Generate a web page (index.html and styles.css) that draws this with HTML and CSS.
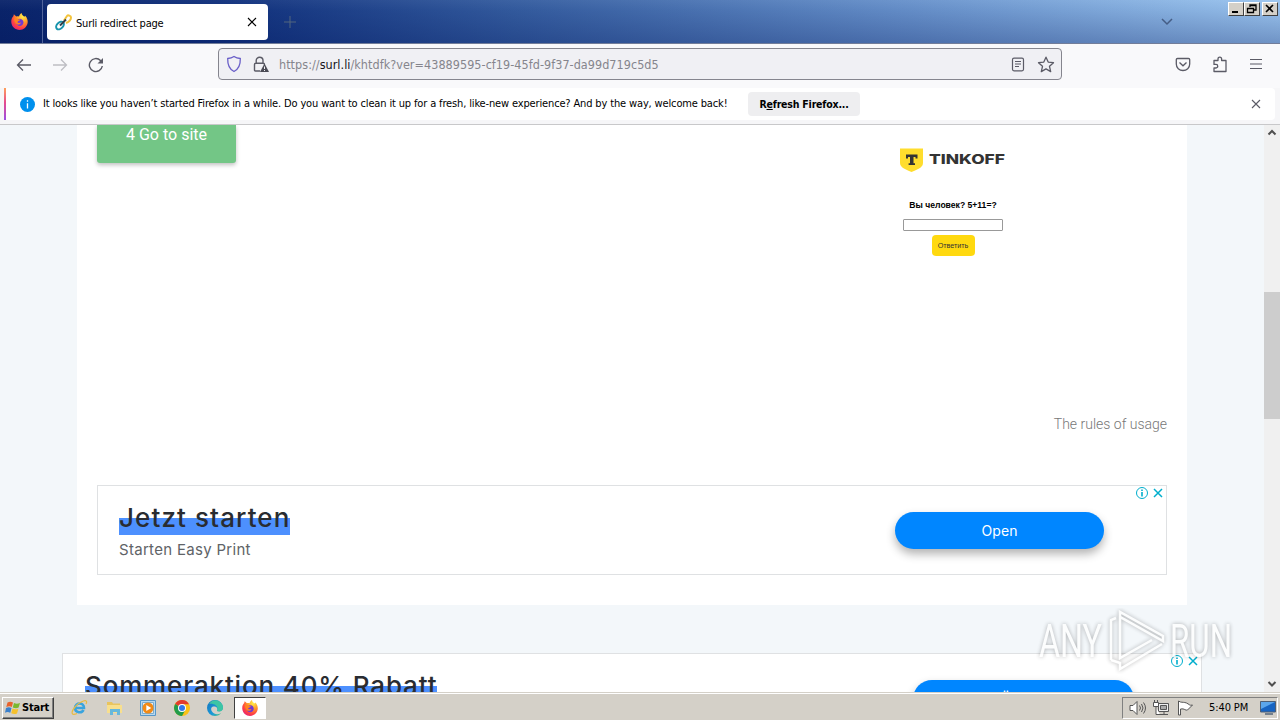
FILE: index.html
```html
<!DOCTYPE html>
<html lang="en">
<head>
    <meta charset="UTF-8">
    <title>Surli redirect page</title>
    <link rel="stylesheet" href="styles.css">
</head>
<body>
    <svg width="0" height="0" class="defs">
        <defs>
            <radialGradient id="fox" cx="0.7" cy="0.2" r="0.9">
                <stop offset="0" stop-color="#fff04a"/>
                <stop offset="0.4" stop-color="#ff9a28"/>
                <stop offset="0.75" stop-color="#ff4044"/>
                <stop offset="1" stop-color="#e0207a"/>
            </radialGradient>
            <linearGradient id="edge" x1="0" y1="0" x2="1" y2="1">
                <stop offset="0" stop-color="#1672bd"/>
                <stop offset="0.6" stop-color="#1a9ad8"/>
                <stop offset="1" stop-color="#55d070"/>
            </linearGradient>
            <symbol id="firefox" viewBox="0 0 16 16">
                <path fill="url(#fox)" d="M.3 9C0 6 1 4.200 2.200 3l.5-1.800L5 3.300c.8-.3 1.700-.3 2.500 0C8 1.800 9 .5 10 0c.1 2 1.500 2.500 2.500 3.600l.8-1C15.300 4.500 16 7 15.700 9.200 15.100 13 12 16 8 16S.7 13 .3 9z"/>
                <path fill="#7139d4" d="M4.500 8.500C5 6.300 6.500 5.300 8.500 5.300c2 .2 3.200 1.600 3.200 3.400 0 2-1.500 3.500-3.500 3.500s-3.700-1.500-3.700-3.700z"/>
                <path fill="#ff8420" d="M3 5.500c1.500-.8 3-.6 4 .5l2 .2c-.5 1.400-2.300 1.100-3 2.500 1 1 2.200.6 3.500.2-.5 1.600-2.500 2.600-4.300 1.500C4 9.500 3 7.500 3 5.500z"/>
            </symbol>
            <symbol id="cross" viewBox="0 0 10 10">
                <path d="M1 1l8 8M9 1L1 9" fill="none" stroke="currentColor" stroke-width="1.100"/>
            </symbol>
            <symbol id="adinfo" viewBox="0 0 14 14">
                <circle cx="7" cy="7" r="5.500" fill="#fff" stroke="#00aecd" stroke-width="1"/>
                <path d="M7 3.500v1.600M7 6v4.500" stroke="#00aecd" stroke-width="1.600"/>
            </symbol>
        </defs>
    </svg>

    <header class="titlebar">
        <div class="pinned"><svg width="17" height="17"><use href="#firefox"/></svg></div>
        <div class="tab">
            <svg class="favicon" width="17" height="17" viewBox="0 0 17 17" fill="none" stroke-width="2">
                <path d="M9 6.500l3-4.500c1-1.300 4-.3 4 1.500 0 2.500-2.500 4.500-5 5.500" stroke="#f3c33c"/>
                <ellipse cx="5" cy="11.500" rx="4.500" ry="3" transform="rotate(-45 5 11.500)" stroke="#1793ac"/>
                <path d="M5 11.500l6-6" stroke="#333e48"/>
            </svg>
            <span class="tab-title">Surli redirect page</span>
            <svg class="tab-close" width="10" height="10"><use href="#cross"/></svg>
        </div>
        <svg class="new-tab" width="12" height="12" viewBox="0 0 12 12"><path d="M6 0v12M0 6h12" stroke="#53667f"/></svg>
        <svg class="all-tabs" width="12" height="8" viewBox="0 0 12 8"><path d="M1 1l5 5 5-5" fill="none" stroke="#455d85" stroke-width="1.500"/></svg>
        <div class="window-buttons">
            <span><svg width="14" height="12"><path d="M3 9h6" stroke="#000" stroke-width="2"/></svg></span>
            <span><svg width="14" height="12"><path d="M5 4V2h6v5H9M5 2.500h6M2.500 5.500h6v4h-6zM2 5.500h7" fill="none" stroke="#000" stroke-width="1.300"/></svg></span>
            <span class="win-close"><svg width="14" height="12"><path d="M3 2l7 7M10 2L3 9" stroke="#000" stroke-width="1.600"/></svg></span>
        </div>
    </header>

    <nav class="toolbar">
        <div class="history">
            <svg width="16" height="16" viewBox="0 0 16 16" fill="none" stroke="#5b5b66" stroke-width="1.300"><path d="M15 8H1.500M7 2.500L1.500 8 7 13.500"/></svg>
            <svg width="16" height="16" viewBox="0 0 16 16" fill="none" stroke="#bebec3" stroke-width="1.300"><path d="M1 8h13.500M9 2.500L14.500 8 9 13.500"/></svg>
            <svg width="16" height="16" viewBox="0 0 16 16" fill="none" stroke="#5b5b66" stroke-width="1.400"><path d="M14.300 9A6.500 6.500 0 1 1 12.500 3.500L14 5"/><path d="M15 1v5.500H9.500z" fill="#5b5b66" stroke="none"/></svg>
        </div>
        <div class="urlbar">
            <svg width="16" height="18" viewBox="0 0 16 18" fill="none" stroke="#6a5fc8" stroke-width="1.300"><path d="M8 1.500c2 1.300 4 1.800 6.300 2C14.500 9.500 13 14 8 16.500 3 14 1.500 9.500 1.700 3.500 4 3.300 6 2.800 8 1.500z"/></svg>
            <svg class="lock" width="16" height="17" viewBox="0 0 16 17"><path d="M7 15H2.500c-1 0-1-.5-1-1V8.500c0-1 .5-1.300 1.300-1.300h7.500c1 0 1.200.6 1.200 1.600M3.200 7V4.600a3.400 3.400 0 0 1 6.800 0V7" fill="none" stroke="#5b5b66" stroke-width="1.400"/><path d="M11.500 7.500L16 16H7z" fill="#4b4b55"/><path d="M11.500 10.500v2.500M11.500 14v1" stroke="#f0f0f4"/></svg>
            <span class="url">https://<b>surl.li</b>/khtdfk?ver=43889595-cf19-45fd-9f37-da99d719c5d5</span>
            <svg class="reader" width="14" height="15" viewBox="0 0 14 15" fill="none" stroke="#5b5b66" stroke-width="1.200"><rect x="1.500" y="1.200" width="11" height="12.600" rx="1.500"/><path d="M4 4.500h6M4 7h6M4 9.500h4"/></svg>
            <svg width="18" height="17" viewBox="0 0 18 17" fill="none" stroke="#5b5b66" stroke-width="1.300" stroke-linejoin="round"><path d="M9 1.200l2.200 4.900 5.300.6-4 3.600 1.200 5.300L9 12.900l-4.700 2.700 1.200-5.300-4-3.600 5.300-.6z"/></svg>
        </div>
        <div class="tools">
            <svg width="16" height="15" viewBox="0 0 16 15" fill="none" stroke="#5b5b66" stroke-width="1.300"><path d="M2.500 1.500h11c.7 0 1.200.4 1.200 1v4.500c0 4-3 6.500-6.700 6.500S1.300 11 1.300 7V2.500c0-.6.500-1 1.200-1z"/><path d="M4.500 5.500L8 8.800l3.500-3.300"/></svg>
            <svg width="16" height="17" viewBox="0 0 16 17" fill="none" stroke="#5b5b66" stroke-width="1.300" stroke-linejoin="round"><path d="M2 4.500h4V3c0-2.500 3.600-2.500 3.600 0v1.500H14V15.500H2V12h2c2.300 0 2.300-3.600 0-3.600H2z"/></svg>
            <svg width="14" height="12" viewBox="0 0 14 12"><path d="M1 1.500h12M1 6h12M1 10.500h12" stroke="#5b5b66" stroke-width="1.200"/></svg>
        </div>
    </nav>

    <div class="notice-wrap">
        <div class="notice">
            <span class="notice-icon"><svg width="15" height="15"><circle cx="7.500" cy="7.500" r="7.500" fill="#0090ed"/><path d="M7.500 3.300v1.500M7.500 6.200v5.300" stroke="#fff" stroke-width="1.300"/></svg></span>
            <span class="notice-text">It looks like you haven’t started Firefox in a while. Do you want to clean it up for a fresh, like-new experience? And by the way, welcome back!</span>
            <button class="refresh" type="button">R<u>e</u>fresh Firefox...</button>
            <svg class="notice-close" width="10" height="10"><use href="#cross"/></svg>
        </div>
    </div>

    <div class="viewport">
        <main class="page">
            <section class="card">
                <div class="card-top">
                    <a class="go-button">4 Go to site</a>
                    <div class="widget">
                        <svg class="brand" width="106" height="25" viewBox="0 0 106 25">
                            <path d="M0 .5h23v14c0 4-2.500 6-11.500 9.500C2.500 20.500 0 18.500 0 14.500z" fill="#ffdd2d"/>
                            <path d="M6 6.500h11.500v4h-2V9h-2v6.200h1.500v1.900H8.600v-1.900H10V9H8v1.500H6z" fill="#333"/>
                            <text class="brand-name" x="29" y="16" textLength="76" lengthAdjust="spacingAndGlyphs">TINKOFF</text>
                        </svg>
                        <div class="question">Вы человек? 5+11=?</div>
                        <input class="answer" type="text">
                        <button class="reply" type="button">Ответить</button>
                    </div>
                </div>
                <a class="rules">The rules of usage</a>
                <div class="ad">
                    <div class="ad-text">
                        <div class="ad-title"><span>Jetzt starten</span></div>
                        <div class="ad-sub">Starten Easy Print</div>
                    </div>
                    <a class="ad-button">Open</a>
                    <div class="ad-choices">
                        <svg width="14" height="14"><use href="#adinfo"/></svg>
                        <svg width="12" height="12" viewBox="0 0 12 12"><path d="M2 2l8 8M10 2l-8 8" stroke="#00aecd" stroke-width="1.500"/></svg>
                    </div>
                </div>
            </section>
            <div class="ad ad-wide">
                <div class="ad-text">
                    <div class="ad-title"><span>Sommeraktion 40% Rabatt</span></div>
                </div>
                <a class="ad-button">Öffnen</a>
                <div class="ad-choices">
                    <svg width="14" height="14"><use href="#adinfo"/></svg>
                    <svg width="12" height="12" viewBox="0 0 12 12"><path d="M2 2l8 8M10 2l-8 8" stroke="#00aecd" stroke-width="1.500"/></svg>
                </div>
            </div>
        </main>
        <div class="scrollbar">
            <svg width="16" height="16"><path d="M4.500 9.500L8 6l3.500 3.500" fill="none" stroke="#505050" stroke-width="2"/></svg>
            <div class="thumb"></div>
            <svg class="down" width="16" height="16"><path d="M4.500 6L8 9.500 11.500 6" fill="none" stroke="#505050" stroke-width="2"/></svg>
        </div>
        <svg class="watermark" width="204" height="66" viewBox="0 0 204 66">
            <g class="mark">
                <text x="3" y="49" textLength="63" lengthAdjust="spacingAndGlyphs">ANY</text>
                <text x="134" y="49" textLength="62" lengthAdjust="spacingAndGlyphs">RUN</text>
                <path d="M75 52V12l5-2M84 8v-4l43 24v5L84 9v41l32-18M75 52l9 3v6l42-25"/>
            </g>
        </svg>
    </div>

    <footer class="taskbar">
        <div class="start">
            <svg width="16" height="16" viewBox="0 0 16 16"><path d="M2.500 2.500c2-1 3.500-1 5.500 0L6.800 7C5 6 3.500 6.200 1.300 7z" fill="#e8622c"/><path d="M9 3c2 1 3.700 1 6 0l-1.400 4.600c-2 .9-3.800.7-5.800-.2z" fill="#7ab82d"/><path d="M1 8c2.200-.9 3.700-.8 5.500.1l-1.200 4.700c-2-1-3.500-.9-5.300-.1z" fill="#3a80cc"/><path d="M7.500 8.500c2 1 3.700 1.100 5.900.2L12 13.400c-2 .9-3.800.7-5.800-.2z" fill="#f6c12c"/></svg>
            <span>Start</span>
        </div>
        <div class="launch">
            <svg width="17" height="17" viewBox="0 0 17 17" fill="none"><path d="M4 9h9c.3-6-9-6-9 0 0 5 7 5.500 8.500 2" stroke="#39a4de" stroke-width="2.600"/><path d="M15 5c3-6-6-3-11 3s-3 9 2 6.500" stroke="#e8bb42" stroke-width="1.200"/></svg>
            <svg width="17" height="17" viewBox="0 0 17 17"><path d="M1 3h5l1 1.500h7V7H1z" fill="#e9c45d"/><path d="M1 6h15v8H1z" fill="#f8df8d"/><path d="M4 10h10v6h-3v-3H7v3H4z" fill="#67b8dc"/></svg>
            <svg width="16" height="16" viewBox="0 0 16 16"><path d="M.5.5h15v15H.5z" fill="#b8d8ee" stroke="#5797c9"/><path d="M2.500 2.500h11v11h-11z" fill="#e5eff5" stroke="#7daccc"/><circle cx="8" cy="8" r="5.500" fill="#f28a16"/><path d="M6.300 5l5 3-5 3z" fill="#fff"/></svg>
            <svg width="16" height="16" viewBox="0 0 16 16"><circle cx="8" cy="8" r="8" fill="#fbc116"/><path d="M8 8L1.100 4A8 8 0 0 1 15 4.300H8z" fill="#e33b2e"/><path d="M1.100 4A8 8 0 0 0 8 16l3.300-6z" fill="#229c4b"/><circle cx="8" cy="8" r="4" fill="#fff"/><circle cx="8" cy="8" r="3" fill="#3478e8"/></svg>
            <svg width="16" height="16" viewBox="0 0 16 16"><path d="M0 8a8 8 0 0 1 16 0c0 3-3 4-6 3 1-1.500.5-4-2-4.500C5 6 3 8 5 11.500c2 3 6 3.500 9 1.500-1 2-3.500 3-6 3a8 8 0 0 1-8-8z" fill="url(#edge)"/><path d="M2 4c5-7 13-3 14 3 0 4-3 5-6 4 2-4-2-8-8-7z" fill="#3dc5a4"/></svg>
            <span class="task-active"><svg width="16" height="16"><use href="#firefox"/></svg></span>
        </div>
        <div class="tray">
            <svg width="17" height="16" viewBox="0 0 17 16" stroke="#555" fill="none"><path d="M1 5.500h3l4-4v13l-4-4H1z" fill="#fff"/><path d="M10.500 5.500q2 2.500 0 5M12.500 4q3 4 0 8M14.500 2.500q4 5.500 0 11"/></svg>
            <svg width="17" height="16" viewBox="0 0 17 16" stroke="#555"><path d="M5.500 3.500h10v8h-10z" fill="#eee"/><path d="M7.500 5.500h6v4h-6z" fill="#aaa"/><path d="M7 14.500h8M11 12v2" fill="none"/><path d="M.5 2.500h5v4h-5zM1.500 0v3M4.500 0v3M3 7v7.500h4" fill="#fff"/></svg>
            <svg width="17" height="16" viewBox="0 0 17 16" stroke="#555"><path d="M1.500 1v14h2V9c4-1 5 2 7 1l5-5c-3 1-3.500-1-6-2s-4-.5-6-1z" fill="#fff"/></svg>
            <span class="clock">5:40 PM</span>
            <svg width="17" height="14" viewBox="0 0 17 14"><path d="M.5.500h15v10.500H.5z" fill="#1764c2" stroke="#4e5f75"/><path d="M1 1h14L1 8z" fill="#5ba6ec"/><path d="M5 13h8" stroke="#536579" stroke-width="1.500"/></svg>
        </div>
    </footer>
</body>
</html>
```
FILE: styles.css
```css
* { box-sizing: border-box; }

body {
    display: flex;
    flex-direction: column;
    width: 1280px;
    height: 720px;
    margin: 0;
    overflow: hidden;
    font: 11px "DejaVu Sans Condensed", "DejaVu Sans", sans-serif;
    color: #000;
    background: #fff;
}

svg { display: block; flex: none; }
.defs { position: absolute; }
button { border: 0; padding: 0; font: inherit; }

/* browser window */
.titlebar {
    display: flex;
    height: 44px;
    flex: none;
    border-bottom: 1px solid #727d99;
    background: linear-gradient(rgba(255,255,255,.04), rgba(0,20,90,.05) 25%, rgba(0,20,90,.28)), linear-gradient(90deg, #0a246a, #10307c 17%, #345c9f 40%, #6690ca 70%, #9bc5ef);
}

.pinned {
    width: 43px;
    padding: 13px 0 0 11px;
    border-right: 1px solid #51649b;
}

.tab {
    display: flex;
    align-items: center;
    width: 221px;
    height: 36px;
    margin: 4px 0 0 4px;
    padding: 0 11px 0 8px;
    border-radius: 4px;
    background: #fff;
}

.tab-title {
    margin-left: 4px;
    padding-top: 2px;
    letter-spacing: -0.2px;
}

.tab-close { margin-left: auto; }
.new-tab { margin: 16px 0 0 16px; }
.all-tabs { margin: 18px 0 0 auto; }

.window-buttons {
    display: flex;
    margin: 2px 2px 0 55px;
}

.window-buttons span {
    width: 16px;
    height: 14px;
    border: 1px solid;
    border-color: #fff #404040 #404040 #fff;
    background: #d4d0c8;
}

.window-buttons .win-close { margin-left: 2px; }

.toolbar {
    display: flex;
    align-items: center;
    height: 44px;
    flex: none;
    padding: 0 17px 4px 16px;
    background: #f9f9fb;
}

.history { display: flex; gap: 20px; width: 202px; padding-top: 1px; }

.urlbar {
    display: flex;
    align-items: center;
    width: 844px;
    height: 32px;
    padding: 0 6px 0 7px;
    border: 1px solid #85858e;
    border-radius: 4px;
    background: #f0f0f4;
}

.lock { margin-left: 11px; }

.url {
    margin-left: 10px;
    font-size: 12.5px;
    letter-spacing: 0.04px;
    color: #85858c;
}

.url b { font-weight: normal; color: #15141a; }
.reader { margin: 0 12px 0 auto; }
.tools { display: flex; align-items: center; gap: 21px; margin-left: auto; }

.notice-wrap {
    height: 37px;
    flex: none;
    padding-right: 5px;
    border-bottom: 1px solid #c8c8ca;
    background: #f6f6f8;
}

.notice {
    display: flex;
    align-items: center;
    height: 32px;
    margin-left: 4px;
    padding-right: 14px;
    border-radius: 4px;
    background: #fff;
}

.notice::before {
    content: "";
    width: 2px;
    height: 32px;
    background: linear-gradient(#ffa05b, #e64b8d 45%, #9b4ee3);
}

.notice-icon { margin-left: 14px; }
.notice-text { width: 684px; margin-left: 8px; padding-bottom: 1px; white-space: nowrap; letter-spacing: -0.145px; }

.refresh {
    width: 112px;
    height: 24px;
    margin-left: 21px;
    border-radius: 4px;
    background: #eeeef0;
    font-weight: bold;
    font-size: 10.5px;
    letter-spacing: -0.2px;
}

.notice-close { margin-left: auto; color: #5b5b66; }

/* page */
.viewport {
    display: flex;
    position: relative;
    height: 567px;
    flex: none;
    overflow: hidden;
}

.page {
    width: 1264px;
    height: 567px;
    overflow: hidden;
    background: #f3f7fa;
    font-family: Roboto, sans-serif;
}

.card {
    display: flex;
    flex-direction: column;
    width: 1110px;
    height: 480px;
    margin: 0 0 48px 77px;
    padding: 0 20px;
    background: #fff;
}

.card-top { display: flex; height: 291px; align-items: flex-start; }

.go-button {
    width: 139px;
    height: 38px;
    border-radius: 0 0 3px 3px;
    background: #73c686;
    box-shadow: 0 2px 4px rgba(0,0,0,.25);
    color: #fff;
    font-size: 16px;
    letter-spacing: 0;
    line-height: 20px;
    text-align: center;
}

.widget {
    display: flex;
    flex-direction: column;
    align-items: center;
    width: 110px;
    margin: 23px 0 0 662px;
    font-family: "Liberation Sans", Arial, sans-serif;
}

.brand-name { font: 800 13.5px Inter, sans-serif; fill: #333; }
.question { margin-top: 27px; font-size: 8.600px; line-height: 10px; font-weight: bold; white-space: nowrap; }

.answer {
    width: 100px;
    height: 12px;
    margin-top: 9px;
    border: 1px solid #999;
    border-radius: 1px;
    padding: 0;
}

.reply {
    width: 43px;
    height: 21px;
    margin-top: 4px;
    border-radius: 4px;
    background: #ffd90f;
    font-size: 7.200px;
    color: #333;
}

.rules {
    align-self: flex-end;
    font-size: 14px;
    font-weight: 300;
    line-height: 16px;
    color: #777;
}

.ad {
    display: flex;
    position: relative;
    width: 1070px;
    height: 90px;
    margin-top: 53px;
    padding-left: 21px;
    border: 1px solid #dfe1e3;
    background: #fff;
}

.ad-text { width: 776px; padding-top: 15px; }

.ad-title {
    height: 36px;
    font: 500 26px/34px Inter, sans-serif;
    letter-spacing: 1.1px;
    color: #292c31;
}

.ad-title span {
    display: inline-block;
    height: 34px;
    white-space: nowrap;
    background: linear-gradient(transparent 17px, #4d90fe 17px);
}

.ad-sub { padding-top: 1px; font: 15px/24px Inter, sans-serif; letter-spacing: .3px; color: #606367; }

.ad-button {
    width: 209px;
    height: 37px;
    margin-top: 26px;
    border-radius: 19px;
    background: #0086ff;
    box-shadow: 0 5px 10px rgba(0,0,0,.3);
    color: #fff;
    font: 14px/37px Inter, sans-serif;
    letter-spacing: .1px;
    text-align: center;
}

.ad-choices { display: flex; gap: 3px; align-items: center; position: absolute; top: 0; right: 2px; }

.ad-wide { width: 1140px; margin: 0 0 0 62px; padding-left: 22px; }
.ad-wide .ad-text { width: 828px; }
.ad-wide .ad-title { letter-spacing: .84px; }
.ad-wide .ad-button { width: 221px; height: 40px; }

.scrollbar { display: flex; flex-direction: column; width: 16px; background: #f0f0f0; }
.thumb { height: 127px; margin-top: 151px; background: #cdcdcd; }
.down { margin-top: auto; }

.watermark { position: absolute; left: 1036px; top: 483px; }

.mark {
    filter: drop-shadow(0 0 2px rgba(0,0,0,.4));
    opacity: .75;
    fill: none;
    stroke: #fff;
    stroke-width: 2.500;
}

.mark text { font: 47px Roboto, sans-serif; fill: #fff; stroke: none; }

/* taskbar */
.taskbar {
    display: flex;
    align-items: center;
    height: 28px;
    flex: none;
    padding: 2px 2px 0;
    border-top: 1px solid #d4d0c8;
    background: #d4d0c8;
    box-shadow: inset 0 1px #fff;
}

.start {
    display: flex;
    align-items: center;
    gap: 1px;
    width: 52px;
    height: 22px;
    padding-left: 2px;
    border: 1px solid;
    border-color: #fff #404040 #404040 #fff;
    box-shadow: inset -1px -1px #808080;
    font-weight: bold;
    letter-spacing: -0.2px;
}

.launch { display: flex; align-items: center; gap: 17.500px; margin-left: 17px; }

.task-active {
    display: flex;
    align-items: center;
    justify-content: center;
    width: 32px;
    height: 22px;
    margin-left: -7px;
    border: 1px solid;
    border-color: #404040 #fff #fff #404040;
    background: #fff;
}

.tray {
    display: flex;
    align-items: center;
    gap: 7px;
    width: 156px;
    height: 22px;
    margin-left: auto;
    padding-left: 6px;
    border: 1px solid;
    border-color: #808080 #fff #fff #808080;
}

.clock { width: 44px; margin: 0 3px 0 8px; white-space: nowrap; letter-spacing: -0.1px; }
```
